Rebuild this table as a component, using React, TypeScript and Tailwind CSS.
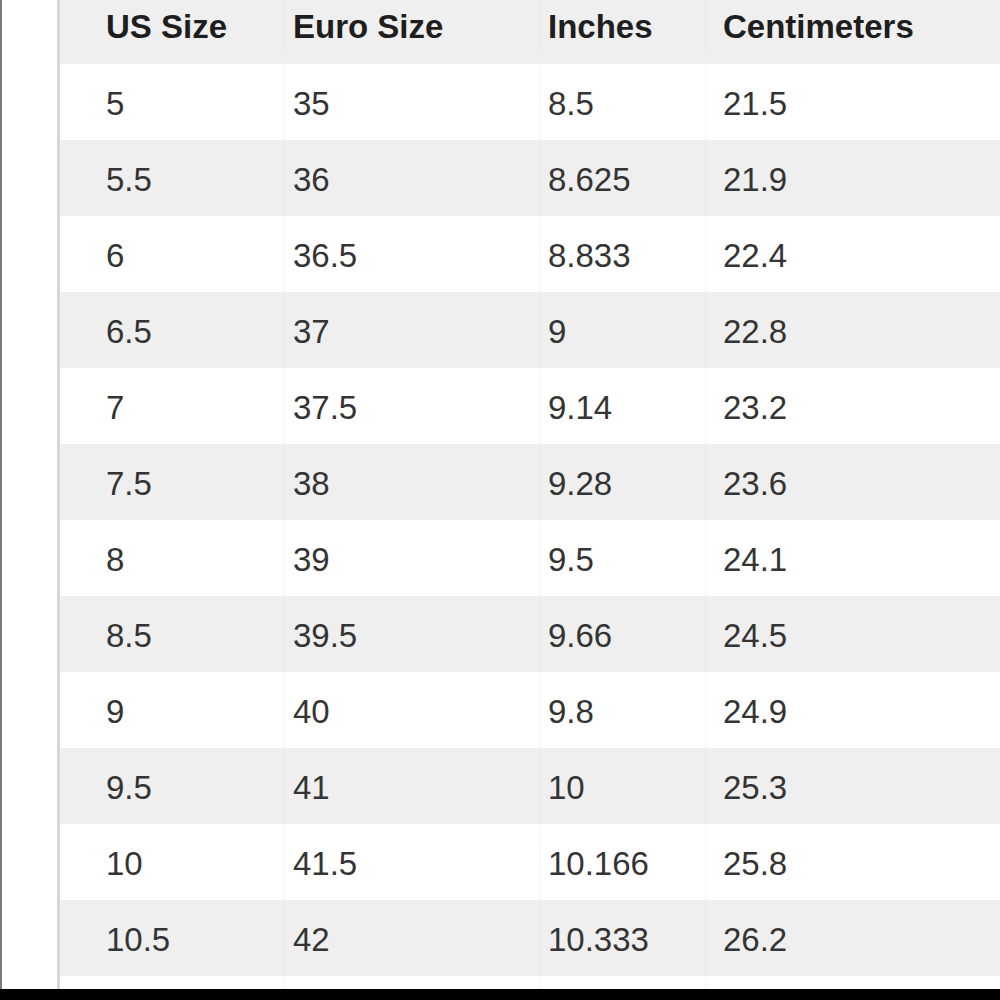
import React from "react";

const rows: [string, string, string, string][] = [
  ["5", "35", "8.5", "21.5"],
  ["5.5", "36", "8.625", "21.9"],
  ["6", "36.5", "8.833", "22.4"],
  ["6.5", "37", "9", "22.8"],
  ["7", "37.5", "9.14", "23.2"],
  ["7.5", "38", "9.28", "23.6"],
  ["8", "39", "9.5", "24.1"],
  ["8.5", "39.5", "9.66", "24.5"],
  ["9", "40", "9.8", "24.9"],
  ["9.5", "41", "10", "25.3"],
  ["10", "41.5", "10.166", "25.8"],
  ["10.5", "42", "10.333", "26.2"],
];

function Row({ cells, header, gray }: { cells: string[]; header?: boolean; gray?: boolean }) {
  const b = gray ? "border-l border-[#e8e8e8]" : "border-l border-[#f4f4f4]";
  const cls = ["pl-[46px]", `pl-[9px] ${b}`, `pl-[7px] ${b}`, `pl-[17px] ${b}`];
  return (
    <div
      className={`grid grid-cols-[223px_257px_165px_1fr] shrink-0 ${
        header ? "h-[64px] pb-[12px]" : "h-[76px] pt-[2px]"
      } ${gray ? "bg-[#efefef]" : "bg-white"}`}
    >
      {cells.map((c, i) => (
        <div
          key={i}
          className={`flex items-center ${cls[i]} ${
            header ? "font-bold text-[#1e1e1e]" : "text-[#343434]"
          } text-[33px] leading-none`}
        >
          {c}
        </div>
      ))}
    </div>
  );
}

export default function App() {
  return (
    <div
      className="w-[1000px] h-[1000px] flex flex-col overflow-hidden bg-white"
      style={{ fontFamily: '"Liberation Sans", Arial, Helvetica, sans-serif' }}
    >
      <div className="flex-1 flex min-h-0 overflow-hidden">
        <div className="w-[57px] shrink-0 bg-white border-l-[2px] border-[#7a7a7a]" />
        <div className="w-[3px] shrink-0 bg-[#d6d6d6]" />
        <div className="flex-1 flex flex-col min-w-0">
          <Row cells={["US Size", "Euro Size", "Inches", "Centimeters"]} header gray />
          {rows.map((r, i) => (
            <Row key={i} cells={r} gray={i % 2 === 1} />
          ))}
          <Row cells={["", "", "", ""]} />
        </div>
      </div>
      <div className="h-[11px] shrink-0 bg-black" />
    </div>
  );
}
